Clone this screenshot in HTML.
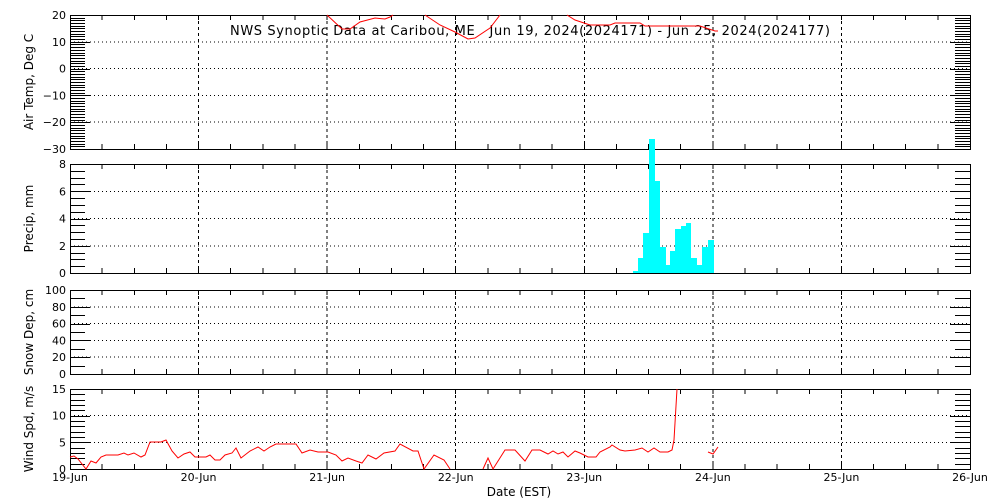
<!DOCTYPE html>
<html><head><meta charset="utf-8"><style>
html,body{margin:0;padding:0;background:#fff;}
svg{display:block;font-family:"DejaVu Sans","Liberation Sans",sans-serif;}
</style></head><body>
<svg id="s" width="1000" height="500" xmlns="http://www.w3.org/2000/svg">
<text x="230" y="35" font-size="13" textLength="600" lengthAdjust="spacing" fill="#000" xml:space="preserve" style="white-space:pre">NWS Synoptic Data at Caribou, ME   Jun 19, 2024(2024171) - Jun 25, 2024(2024177)</text>
</svg>
<script>
var s=document.getElementById('s'),NS='http://www.w3.org/2000/svg';
function el(t,a,txt){var e=document.createElementNS(NS,t);for(var k in a)e.setAttribute(k,a[k]);if(txt!==undefined)e.textContent=txt;s.appendChild(e);return e;}
var L=70,R=970,D=(R-L)/7;
function line(x1,y1,x2,y2,st,dash){var a={x1:x1,y1:y1,x2:x2,y2:y2,stroke:st||'#000','stroke-width':1,'shape-rendering':'crispEdges'};if(dash)a['stroke-dasharray']=dash;el('line',a);}
function panel(top,bot,vmin,vmax,minorStep,majorStep,labelStep,gridVals,label){
  var f=function(v){return bot-(v-vmin)/(vmax-vmin)*(bot-top);};
  gridVals.forEach(function(v){line(L,f(v),R,f(v),'#000','1,3');});
  for(var d=1;d<7;d++){line(L+d*D,top,L+d*D,bot,'#000','3,3');}
  for(var v=vmin;v<=vmax+1e-6;v+=minorStep){
    var y=Math.round(f(v))+0.5,maj=Math.abs(v/majorStep-Math.round(v/majorStep))<1e-6;
    line(L,y,L+(maj?20:15),y);line(R-(maj?20:15),y,R,y);
  }
  for(var v=vmin;v<=vmax+1e-6;v+=labelStep){
    el('text',{x:L-4,y:f(v)+4,'font-size':11,'text-anchor':'end'},(v<0?'\u2212':'')+Math.abs(v));
  }
  for(var i=1;i<28;i++){var x=L+i*D/4;line(x,top,x,top+5);line(x,bot-5,x,bot);}
  el('rect',{x:L+0.5,y:top+0.5,width:R-L,height:bot-top,fill:'none',stroke:'#000','stroke-width':1.2,'shape-rendering':'crispEdges'});
  var cy=(top+bot)/2;
  el('text',{x:0,y:0,'font-size':12,'text-anchor':'middle',transform:'translate(33,'+cy+') rotate(-90)'},label);
  return f;
}
panel(15,149,-30,20,1,10,10,[10,0,-10,-20],'Air Temp, Deg C');
var fp=panel(164,273,0,8,0.5,2,2,[2,4,6],'Precip, mm');
panel(290,374,0,100,10,20,20,[20,40,60,80],'Snow Dep, cm');
panel(389,469,0,15,1,5,5,[5,10],'Wind Spd, m/s');
var bars=[[633,271],[638,258],[643,233],[649,139],[655,181],[660,247],[666,265],[670,251],[675,229],[681,226],[686,223],[691,258],[697,265],[702,247],[708,240]];
for(var i=0;i<bars.length;i++){var x=bars[i][0],x2=(i<bars.length-1?bars[i+1][0]:714);el('rect',{x:x,y:bars[i][1],width:x2-x,height:273-bars[i][1],fill:'#00ffff'});}
function pl(p){el('polyline',{points:p,fill:'none',stroke:'#ff0000','stroke-width':1});}
pl('327,15 342,29 350,29 360,22 375,18 385,19 390,17 393,15');
pl('425,15 440,25 455,32 468,39 475,38 490,28 500,15');
pl('567,15 575,20 590,25 610,25 615,23 640,23 645,26 700,26 715,31 718,31');
pl('70,457 74,456 78,459 82,464 86,469 91,461 96,463 101,457 106,455 113,455 118,455 124,453 128,455 134,453 141,457 145,455 150,442 161,442 166,440 172,451 178,458 184,454 190,452 195,457 206,457 210,455 215,460 220,460 225,455 232,453 236,448 241,458 250,451 258,447 264,451 270,447 276,444 282,444 296,444 302,453 310,450 318,452 328,452 336,455 342,461 348,458 356,461 362,463 368,455 376,459 384,453 395,451 400,444 413,451 418,451 424,469 434,455 444,460 450,469');
pl('483,469 488,458 493,469 505,450 515,450 525,461 532,450 540,450 548,454 553,451 558,454 563,452 568,457 575,451 580,453 588,457 596,457 600,452 610,447 612,445 620,450 625,451 635,450 642,448 648,452 654,448 660,452 668,452 672,450 674,440 677,389');
pl('708,452 713,454 718,447');
var lab=['19-Jun','20-Jun','21-Jun','22-Jun','23-Jun','24-Jun','25-Jun','26-Jun'];
for(var d=0;d<8;d++)el('text',{x:L+d*D,y:481,'font-size':11,'text-anchor':'middle'},lab[d]);
el('text',{x:519,y:496,'font-size':12,'text-anchor':'middle'},'Date (EST)');
</script>
</body></html>
